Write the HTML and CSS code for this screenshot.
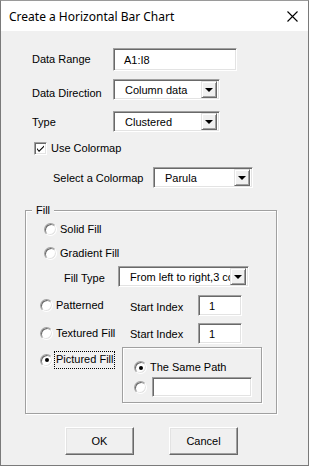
FILE: index.html
```html
<!DOCTYPE html>
<html>
<head>
<meta charset="utf-8">
<link rel="stylesheet" href="styles.css">
</head>
<body>
<div class="window">
  <div class="titlebar">
    <span class="title">Create a Horizontal Bar Chart</span>
    <svg class="close" width="11" height="11" viewBox="0 0 11 11"><path d="M0.5 0.5 L10.5 10.5 M10.5 0.5 L0.5 10.5" stroke="#000" stroke-width="1.1" fill="none"/></svg>
  </div>
  <div class="content">
    <div class="row r1">
      <span class="lbl w81">Data Range</span>
      <div class="edit w124">A1:I8</div>
    </div>
    <div class="row r2">
      <span class="lbl w81 low8">Data Direction</span>
      <div class="combo w107"><span class="ctext">Column data</span><span class="cbtn"><i class="tri"></i></span></div>
    </div>
    <div class="row r3">
      <span class="lbl w81 low2">Type</span>
      <div class="combo w107"><span class="ctext">Clustered</span><span class="cbtn"><i class="tri"></i></span></div>
    </div>
    <div class="row r4">
      <span class="check"><svg width="9" height="9" viewBox="0 0 9 9"><path d="M1 4 L3 6.5 L8 1.5 L8 3 L3 8 L1 5.5 Z" fill="#000"/></svg></span>
      <span class="lbl">Use Colormap</span>
    </div>
    <div class="row r5">
      <span class="lbl w100 low2">Select a Colormap</span>
      <div class="combo w100c"><span class="ctext">Parula</span><span class="cbtn"><i class="tri"></i></span></div>
    </div>
    <div class="group fill">
      <span class="legend">Fill</span>
      <div class="row g1">
        <span class="radio"></span><span class="lbl">Solid Fill</span>
      </div>
      <div class="row g2">
        <span class="radio"></span><span class="lbl">Gradient Fill</span>
      </div>
      <div class="row g3">
        <span class="lbl w54 low4">Fill Type</span>
        <div class="combo w131"><span class="ctext clip">From left to right,3 colors</span><span class="cbtn"><i class="tri"></i></span></div>
      </div>
      <div class="row g4">
        <div class="opt w90"><span class="radio"></span><span class="lbl">Patterned</span></div>
        <span class="lbl w68 low4">Start Index</span>
        <div class="edit w44">1</div>
      </div>
      <div class="row g5">
        <div class="opt w90"><span class="radio"></span><span class="lbl">Textured Fill</span></div>
        <span class="lbl w68 low2">Start Index</span>
        <div class="edit w44">1</div>
      </div>
      <div class="row g6">
        <div class="opt w82 pic"><span class="radio on"></span><span class="lbl focus">Pictured Fill</span></div>
        <div class="group inner">
          <div class="row i1"><span class="radio on"></span><span class="lbl">The Same Path</span></div>
          <div class="row i2"><span class="radio"></span><div class="edit w100e"></div></div>
        </div>
      </div>
    </div>
    <div class="buttons">
      <div class="btn">OK</div>
      <div class="btn">Cancel</div>
    </div>
  </div>
</div>
</body>
</html>
```
FILE: styles.css
```css
html, body { margin: 0; padding: 0; background: #f0f0f0; }
body { font-family: "Liberation Sans", Arial, sans-serif; font-size: 11px; color: #000; }
.window { width: 307px; height: 464px; border: 1px solid #7a7a7a; border-top-color: #9a9a9a; background: #f0f0f0; display: flex; flex-direction: column; }
.titlebar { height: 30px; background: #fff; display: flex; align-items: center; justify-content: space-between; padding: 0 10px 0 8px; }
.title { font-family: "Noto Sans", "Open Sans", sans-serif; font-size: 12px; color: #000; }
.content { flex: 1; display: flex; flex-direction: column; }
.row { display: flex; align-items: center; }
.lbl { white-space: nowrap; line-height: 13px; }
.low2 { padding-top: 2px; } .low4 { padding-top: 4px; } .low8 { padding-top: 8px; }
.w81 { width: 81px; } .w100 { width: 100px; } .w54 { width: 54px; } .w68 { width: 68px; }
.r1 { margin-top: 17px; height: 23px; padding-left: 31px; }
.r2 { margin-top: 8px; height: 21px; padding-left: 31px; }
.r3 { margin-top: 11px; height: 21px; padding-left: 31px; }
.r4 { margin-top: 10px; height: 13px; padding-left: 33px; }
.r5 { margin-top: 12px; height: 21px; padding-left: 52px; }
.edit { box-sizing: border-box; background: #fff; border: 1px solid; border-color: #a0a0a0 #fff #fff #a0a0a0; box-shadow: inset 1px 1px #696969, inset -1px -1px #e3e3e3; padding-left: 10px; display: flex; align-items: center; }
.w124 { width: 124px; height: 23px; }
.w44 { width: 44px; height: 21px; padding-left: 10px; }
.w100e { width: 100px; height: 20px; margin-left: 5px; }
.combo { box-sizing: border-box; height: 21px; background: #fff; border: 1px solid; border-color: #a0a0a0 #fff #fff #a0a0a0; box-shadow: inset 1px 1px #696969, inset -1px -1px #e3e3e3; display: flex; align-items: center; padding: 2px; }
.w107 { width: 107px; } .w100c { width: 100px; } .w131 { width: 131px; }
.ctext { flex: 1; padding-left: 9px; white-space: nowrap; overflow: hidden; }
.cbtn { width: 16px; height: 17px; box-sizing: border-box; background: #f0f0f0; border: 1px solid; border-color: #e3e3e3 #696969 #696969 #e3e3e3; box-shadow: inset 1px 1px #fff, inset -1px -1px #a0a0a0; display: flex; align-items: center; justify-content: center; }
.tri { width: 0; height: 0; border-left: 4px solid transparent; border-right: 4px solid transparent; border-top: 4px solid #000; margin-top: 1px; }
.check { box-sizing: border-box; width: 13px; height: 13px; background: #fff; border: 1px solid; border-color: #a0a0a0 #fff #fff #a0a0a0; box-shadow: inset 1px 1px #696969, inset -1px -1px #e3e3e3; display: flex; align-items: center; justify-content: center; margin-right: 4px; }
.group { box-sizing: border-box; border: 1px solid #a0a0a0; box-shadow: inset 1px 1px #fff, 1px 1px #fff; position: relative; }
.fill { margin-left: 24px; width: 252px; height: 204px; margin-top: 22px; display: flex; flex-direction: column; }
.legend { position: absolute; left: 6px; top: -7px; background: #f0f0f0; padding: 0 4px 0 4px; line-height: 13px; }
.radio { box-sizing: border-box; width: 13px; height: 13px; border-radius: 50%; background: #fff; border: 1px solid; border-color: #a0a0a0 #fff #fff #a0a0a0; box-shadow: inset 1px 1px #696969, inset -1px -1px #e3e3e3; position: relative; flex: none; margin-right: 3px; }
.radio.on::after { content: ""; position: absolute; left: 3.5px; top: 3.5px; width: 4px; height: 4px; border-radius: 50%; background: #000; }
.g1 { margin-top: 12px; height: 13px; padding-left: 18px; }
.g2 { margin-top: 11px; height: 13px; padding-left: 18px; }
.g3 { margin-top: 6px; height: 21px; padding-left: 38px; }
.g4 { margin-top: 8px; height: 21px; padding-left: 14px; }
.g5 { margin-top: 7px; height: 21px; padding-left: 14px; }
.g6 { margin-top: 3px; padding-left: 14px; align-items: flex-start; }
.opt { display: flex; align-items: center; }
.w90 { width: 90px; }
.w82 { width: 82px; }
.pic { margin-top: 5px; }
.focus { outline: 1px dotted #000; outline-offset: 0; padding: 1px 1px 2px 1px; margin-left: -1px; }
.inner { width: 140px; height: 56px; display: flex; flex-direction: column; }
.i1 { margin-top: 13px; height: 13px; padding-left: 11px; }
.i2 { margin-top: 3px; height: 20px; padding-left: 11px; }
.i2 .radio { margin-right: 0; }
.buttons { display: flex; gap: 35px; padding-left: 64px; margin-top: 13px; }
.btn { box-sizing: border-box; width: 69px; height: 28px; background: #f0f0f0; border: 1px solid; border-color: #fff #696969 #696969 #fff; box-shadow: inset -1px -1px #a0a0a0, inset 1px 1px #e3e3e3; display: flex; align-items: center; justify-content: center; }
```
